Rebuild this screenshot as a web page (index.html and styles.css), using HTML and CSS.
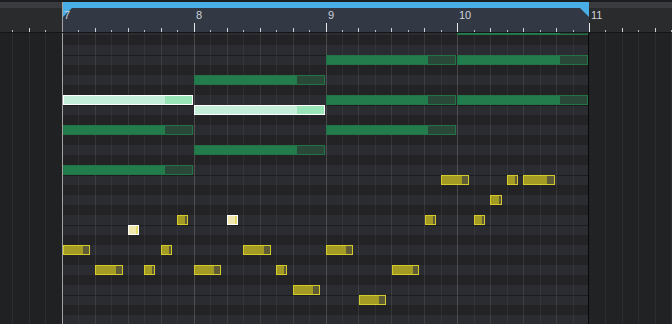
FILE: index.html
```html
<!DOCTYPE html>
<html>
<head>
<meta charset="utf-8">
<title>Piano Roll</title>
<link rel="stylesheet" href="styles.css">
</head>
<body>
<div class="app">
  <div class="ruler">
    <div class="r-side r-left">
      <div class="r-strip"></div>
      <div class="r-body">
        <span class="lt lt1"></span><span class="lt lt2"></span><span class="lt lt3"></span>
      </div>
    </div>
    <div class="r-loop">
      <div class="loop-strip"></div>
      <div class="r-body loop-body">
        <div class="r-bar b1"><span class="num">7</span><div class="ticks pa"><span class="t"></span><span class="t"></span><span class="t"></span><span class="t"></span><span class="t"></span><span class="t"></span><span class="t"></span><span class="t"></span></div></div>
        <div class="r-bar b2"><span class="num">8</span><div class="ticks pa"><span class="t"></span><span class="t"></span><span class="t"></span><span class="t"></span><span class="t"></span><span class="t"></span><span class="t"></span><span class="t"></span></div></div>
        <div class="r-bar b3"><span class="num">9</span><div class="ticks pb"><span class="t"></span><span class="t"></span><span class="t"></span><span class="t"></span><span class="t"></span><span class="t"></span><span class="t"></span><span class="t"></span></div></div>
        <div class="r-bar b4"><span class="num">10</span><div class="ticks pc"><span class="t"></span><span class="t"></span><span class="t"></span><span class="t"></span><span class="t"></span><span class="t"></span><span class="t"></span><span class="t"></span></div></div>
      </div>
      <span class="flag flag-l"></span>
      <span class="flag flag-r"></span>
    </div>
    <div class="r-side r-right">
      <div class="r-strip"></div>
      <div class="r-body">
        <div class="r-bar rb-right"><span class="num">11</span><div class="ticks pa"><span class="t"></span><span class="t"></span><span class="t"></span><span class="t"></span><span class="t"></span><span class="t"></span></div></div>
      </div>
    </div>
  </div>

  <div class="canvas">
    <div class="p-left">
      <span class="pl w17"></span><span class="pl w16"></span><span class="pl w17"></span>
    </div>
    <div class="grid">
      <div class="gbar b1 pa"><span class="gc"></span><span class="gc"></span><span class="gc"></span><span class="gc"></span><span class="gc"></span><span class="gc"></span><span class="gc"></span><span class="gc"></span></div>
      <div class="gbar b2 pa"><span class="gc"></span><span class="gc"></span><span class="gc"></span><span class="gc"></span><span class="gc"></span><span class="gc"></span><span class="gc"></span><span class="gc"></span></div>
      <div class="gbar b3 pb"><span class="gc"></span><span class="gc"></span><span class="gc"></span><span class="gc"></span><span class="gc"></span><span class="gc"></span><span class="gc"></span><span class="gc"></span></div>
      <div class="gbar b4 pc"><span class="gc"></span><span class="gc"></span><span class="gc"></span><span class="gc"></span><span class="gc"></span><span class="gc"></span><span class="gc"></span><span class="gc"></span></div>

      <div class="notes">
        <div class="note g" style="left:395px;top:-8px;width:131px"></div>
        <div class="note g" style="left:264px;top:22px;width:130px"></div>
        <div class="note g" style="left:395px;top:22px;width:131px"></div>
        <div class="note g" style="left:132px;top:42px;width:131px"></div>
        <div class="note g sel" style="left:1px;top:62px;width:130px"></div>
        <div class="note g" style="left:264px;top:62px;width:130px"></div>
        <div class="note g" style="left:395px;top:62px;width:131px"></div>
        <div class="note g sel" style="left:132px;top:72px;width:131px"></div>
        <div class="note g" style="left:1px;top:92px;width:130px"></div>
        <div class="note g" style="left:264px;top:92px;width:130px"></div>
        <div class="note g" style="left:132px;top:112px;width:131px"></div>
        <div class="note g" style="left:1px;top:132px;width:130px"></div>

        <div class="note y" style="left:379px;top:142px;width:28px"></div>
        <div class="note y" style="left:445px;top:142px;width:11px"></div>
        <div class="note y" style="left:461px;top:142px;width:32px"></div>
        <div class="note y" style="left:428px;top:162px;width:12px"></div>
        <div class="note y" style="left:115px;top:182px;width:11px"></div>
        <div class="note y sel" style="left:165px;top:182px;width:11px"></div>
        <div class="note y" style="left:363px;top:182px;width:11px"></div>
        <div class="note y" style="left:412px;top:182px;width:11px"></div>
        <div class="note y sel" style="left:66px;top:192px;width:11px"></div>
        <div class="note y" style="left:1px;top:212px;width:27px"></div>
        <div class="note y" style="left:99px;top:212px;width:11px"></div>
        <div class="note y" style="left:181px;top:212px;width:28px"></div>
        <div class="note y" style="left:264px;top:212px;width:27px"></div>
        <div class="note y" style="left:33px;top:232px;width:28px"></div>
        <div class="note y" style="left:82px;top:232px;width:11px"></div>
        <div class="note y" style="left:132px;top:232px;width:27px"></div>
        <div class="note y" style="left:214px;top:232px;width:11px"></div>
        <div class="note y" style="left:330px;top:232px;width:27px"></div>
        <div class="note y" style="left:231px;top:252px;width:27px"></div>
        <div class="note y" style="left:297px;top:262px;width:27px"></div>
      </div>
    </div>
    <div class="endline"></div>
    <div class="p-right pa">
      <span class="pr"></span><span class="pr"></span><span class="pr"></span><span class="pr"></span><span class="pr"></span><span class="pr"></span>
    </div>
  </div>
</div>
</body>
</html>
```

FILE: styles.css
```css
body {
  margin: 0;
  background: #1c1d1f;
  font-family: "Liberation Sans", Arial, sans-serif;
}

.app {
  width: 672px;
  height: 324px;
  display: flex;
  flex-direction: column;
  overflow: hidden;
}

/* ---------- ruler ---------- */
.ruler {
  height: 33px;
  flex: none;
  box-sizing: border-box;
  border-top: 2px solid #1c1d1f;
  border-bottom: 1px solid #151617;
  display: flex;
}

.r-side {
  display: flex;
  flex-direction: column;
  background: #2a2b2d;
}

.r-left { width: 62px; }
.r-right { flex: 1; }

.r-strip {
  height: 6px;
  flex: none;
  background: #3a3b3e;
}

.r-body {
  flex: 1;
  display: flex;
  align-items: flex-end;
}

.r-left .r-body { justify-content: flex-end; }

.r-loop {
  width: 526px;
  border-left: 1px solid #a2a2a2;
  position: relative;
  display: flex;
  flex-direction: column;
  background: #323945;
}

.loop-strip {
  height: 6px;
  flex: none;
  background: #4aaee6;
}

.loop-body { align-items: stretch; }

.r-bar {
  display: flex;
  flex-direction: column;
  justify-content: space-between;
  flex: none;
}

.r-bar.b1 { width: 132px; margin-left: -1px; }
.r-bar.b2 { width: 132px; }
.r-bar.b3 { width: 131px; }
.r-bar.b4 { width: 132px; }
.r-bar.rb-right { width: 100%; align-self: stretch; }

.num {
  font-size: 11px;
  line-height: 12px;
  color: #cdd2da;
  padding-left: 2px;
  margin-top: 1px;
  position: relative;
  z-index: 1;
}

.ticks {
  display: flex;
  align-items: flex-end;
  height: 9px;
  width: 100%;
}

.t {
  height: 2px;
  box-sizing: border-box;
  border-left: 1px solid #b9bcc2;
}

.t:nth-child(odd) { height: 4px; border-left-color: #cfd1d5; }
.t:first-child { height: 9px; border-left-color: #e6e6e6; }
.b1 .t:first-child { border-left-color: transparent; }

.lt {
  box-sizing: border-box;
  border-left: 1px solid #b9bcc2;
  flex: none;
}
.lt1 { width: 17px; height: 2px; }
.lt2 { width: 16px; height: 4px; border-left-color: #cfd1d5; }
.lt3 { width: 17px; height: 2px; }

.flag {
  position: absolute;
  top: 6px;
  width: 9px;
  height: 9px;
  background: #4aaee6;
}
.flag-l { left: 0; clip-path: polygon(0 0, 100% 0, 0 100%); }
.flag-r { right: 0; clip-path: polygon(0 0, 100% 0, 100% 100%); }

/* ---------- width patterns for eighth columns ---------- */
.pa > *, .pb > *, .pc > * { flex: none; }
.pa > :nth-child(odd) { width: 16px; }
.pa > :nth-child(even) { width: 17px; }
.pb > * { width: 16px; }
.pb > :nth-child(3), .pb > :nth-child(5), .pb > :nth-child(7) { width: 17px; }
.pc > :nth-child(odd) { width: 17px; }
.pc > :nth-child(even) { width: 16px; }
.pa > :last-child, .pb > :last-child, .pc > :last-child { flex: 1 1 0; width: auto; }

/* ---------- canvas ---------- */
.canvas {
  flex: 1;
  display: flex;
  min-height: 0;
}

.p-left {
  width: 62px;
  flex: none;
  display: flex;
  justify-content: flex-end;
  background: #202123;
}

.pl {
  box-sizing: border-box;
  border-left: 1px solid #2c2d30;
}
.pl.w17 { width: 17px; }
.pl.w16 { width: 16px; }

.grid {
  width: 526px;
  flex: none;
  display: flex;
  position: relative;
  overflow: hidden;
  background-image: linear-gradient(to bottom,
    #2a2c31 0, #2a2c31 10px,
    #1b1c1e 10px, #1b1c1e 11px,
    #2a2c31 11px, #2a2c31 20px,
    #232325 20px, #232325 30px,
    #2a2c31 30px, #2a2c31 40px,
    #232325 40px, #232325 50px,
    #2a2c31 50px, #2a2c31 60px,
    #1b1c1e 60px, #1b1c1e 61px,
    #2a2c31 61px, #2a2c31 70px,
    #232325 70px, #232325 80px,
    #2a2c31 80px, #2a2c31 90px,
    #232325 90px, #232325 100px,
    #2a2c31 100px, #2a2c31 110px,
    #232325 110px, #232325 120px);
  background-size: 100% 120px;
  background-position: 0 12px;
  background-repeat: repeat-y;
}

.gbar { display: flex; flex: none; }
.gbar.b1 { width: 132px; }
.gbar.b2 { width: 132px; }
.gbar.b3 { width: 131px; }
.gbar.b4 { width: 131px; }

.gc {
  box-sizing: border-box;
  border-left: 1px solid rgba(255, 255, 255, 0.05);
}
.gc:nth-child(odd) { border-left-color: rgba(255, 255, 255, 0.09); }
.gc:first-child { border-left-color: rgba(255, 255, 255, 0.17); }
.b1 .gc:first-child { border-left-color: #a2a2a2; }

.endline {
  width: 1px;
  flex: none;
  background: #08090a;
}

.p-right {
  flex: 1;
  display: flex;
  background: #212224;
}

.pr {
  box-sizing: border-box;
  border-left: 1px solid #2c2d30;
}
.pr:first-child { border-left-color: transparent; }

/* ---------- notes ---------- */
.notes {
  position: absolute;
  inset: 0;
}

.note {
  position: absolute;
  height: 10px;
  box-sizing: border-box;
  border: 1px solid;
}

.g {
  border-color: #227347;
  background: linear-gradient(90deg, #237c4c 79%, #2a4838 79%);
}
.g.sel {
  border-color: #ffffff;
  background: linear-gradient(90deg, #c4eed9 79%, #9ae5b8 79%);
}
.y {
  border-color: #d4ca2c;
  background: linear-gradient(90deg, #a39b24 78%, #5e5b36 78%);
}
.y.sel {
  border-color: #ffffff;
  background: linear-gradient(90deg, #f0e8b0 78%, #e6d96c 78%);
}
```
